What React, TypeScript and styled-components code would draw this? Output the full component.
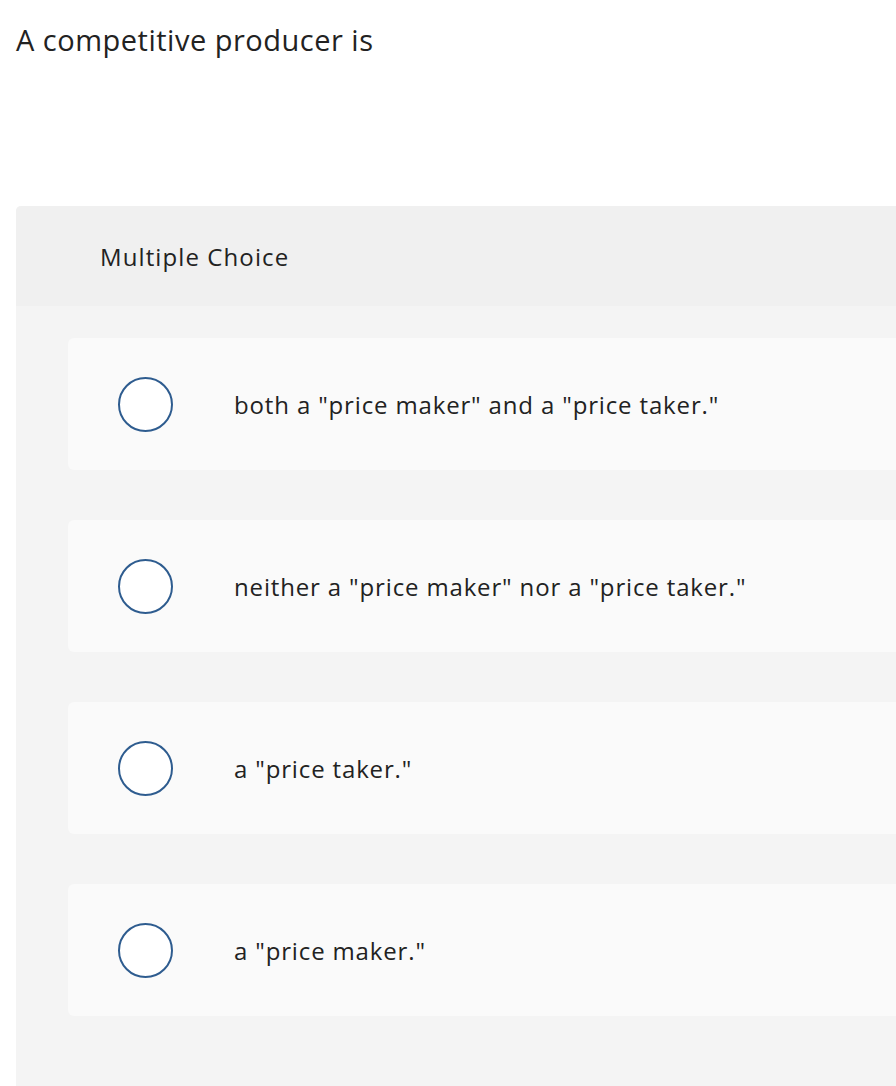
import React from "react";
import styled, { createGlobalStyle } from "styled-components";

const Global = createGlobalStyle`
  html, body { margin: 0; padding: 0; background: #ffffff; }
  body {
    font-family: "Open Sans", "Noto Sans", sans-serif;
    color: #222222;
    overflow: hidden;
    font-variant-ligatures: none;
  }
`;

const Page = styled.div`
  padding: 20px 0 0 16px;
  width: 896px;
  box-sizing: border-box;
`;

const Prompt = styled.h1`
  margin: 0;
  font-size: 29px;
  font-weight: 400;
  line-height: 40px;
  letter-spacing: 0.5px;
  color: #222222;
`;

const Card = styled.section`
  margin-top: 146px;
  width: 880px;
  border-radius: 5px 0 0 0;
  overflow: hidden;
  background: #f4f4f4;
`;

const CardHeader = styled.div`
  height: 100px;
  background: #f0f0f0;
  display: flex;
  align-items: center;
  padding-left: 84px;
  font-size: 24px;
  letter-spacing: 1.1px;
  color: #222222;
`;

const Options = styled.div`
  display: flex;
  flex-direction: column;
  gap: 50px;
  padding: 32px 0 70px 52px;
`;

const Option = styled.label`
  height: 132px;
  background: #fafafa;
  border-radius: 6px 0 0 6px;
  display: flex;
  align-items: center;
  padding-left: 50px;
  cursor: pointer;
`;

const Radio = styled.span`
  width: 55px;
  height: 55px;
  box-sizing: border-box;
  border: 2px solid #2e5c8f;
  border-radius: 50%;
  background: #ffffff;
  flex-shrink: 0;
`;

const OptionText = styled.span`
  margin-left: 61px;
  font-size: 24px;
  letter-spacing: 0.85px;
  color: #222222;
`;

const choices = [
  'both a "price maker" and a "price taker."',
  'neither a "price maker" nor a "price taker."',
  'a "price taker."',
  'a "price maker."',
];

export default function App() {
  return (
    <>
      <Global />
      <Page>
        <Prompt>A competitive producer is</Prompt>
        <Card>
          <CardHeader>Multiple Choice</CardHeader>
          <Options>
            {choices.map((c) => (
              <Option key={c}>
                <Radio />
                <OptionText>{c}</OptionText>
              </Option>
            ))}
          </Options>
        </Card>
      </Page>
    </>
  );
}
